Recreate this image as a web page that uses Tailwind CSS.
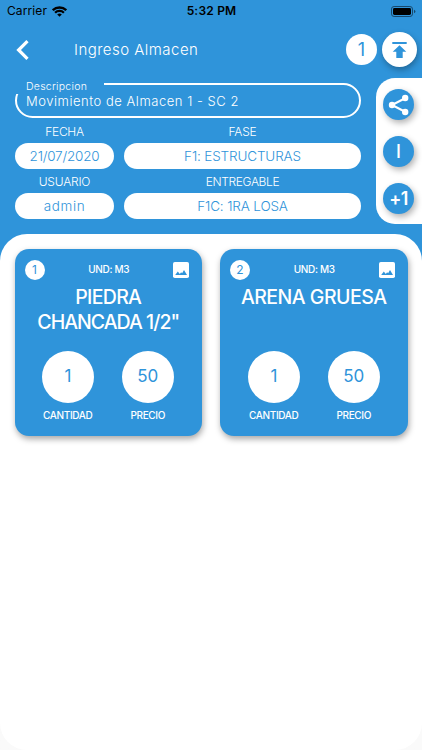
<!DOCTYPE html>
<html lang="es">
<head>
  <meta charset="UTF-8">
  <meta name="viewport" content="width=device-width, initial-scale=1.0">
  <title>Ingreso Almacen</title>
  <script src="https://cdn.jsdelivr.net/npm/@tailwindcss/browser@4"></script>
</head>
<body class="w-[422px] h-[750px] overflow-hidden bg-[#fafafa] font-['Inter',sans-serif] font-light text-white">
  <div class="h-full bg-linear-to-b from-[#2f94da] from-[280px] to-[#fafafa] to-[280px] flex flex-col">
    <!-- Barra de estado -->
    <div class="h-[22px] shrink-0 grid grid-cols-3 items-center pl-[7px] pr-[6px] text-black text-xs">
      <div class="flex items-center gap-[5px]">
        <span class="font-normal tracking-[0.1px]">Carrier</span>
        <svg class="w-[15px] h-[11px]" viewBox="0 0 15 11" fill="none" stroke="currentColor" stroke-width="2.3">
          <path d="M.8 4.2a9.6 9.6 0 0 1 13.4 0M3.1 6.7a6.3 6.3 0 0 1 8.8 0"/>
          <path d="M7.5 10.8 5.2 8.5a3.3 3.3 0 0 1 4.6 0z" fill="currentColor" stroke="none"/>
        </svg>
      </div>
      <span class="font-semibold text-center tracking-[0.2px]">5:32 PM</span>
      <svg class="justify-self-end w-[25px] h-[11px]" viewBox="0 0 25 11">
        <rect x=".5" y=".5" width="21" height="10" rx="2.6" fill="none" stroke="#17486b"/>
        <rect x="2" y="2" width="18" height="7" rx="1.4"/>
        <path d="M23 3.7v3.6q1.4-.5 1.4-1.8T23 3.7z" fill="#17486b"/>
      </svg>
    </div>

    <!-- Cabecera -->
    <header class="h-[55px] shrink-0 flex items-center pl-[16px] pr-[5px]">
      <svg class="w-[13px] h-5" viewBox="0 0 13 20" fill="none" stroke="currentColor" stroke-width="3.2"><path d="M11.5 1.2 2.6 10l8.9 8.8"/></svg>
      <h1 class="ml-[45px] pt-[2px] flex-1 text-[15px] tracking-[0.47px]">Ingreso Almacen</h1>
      <span class="size-[31px] rounded-full bg-white text-[#2f94da] text-[18px] font-normal flex items-center justify-center">1</span>
      <button class="ml-[5px] size-[35px] rounded-full bg-white text-[#2f94da] flex items-center justify-center shadow-[1px_3px_6px_rgba(0,0,0,0.3)]">
        <svg class="w-[15px] h-4" viewBox="0 0 15 16" fill="currentColor"><path d="M.3 0h14.4v1.9H.3zM7.5 3.3l6.8 6.5h-3.6v6.1H4.3V9.8H.7z"/></svg>
      </button>
    </header>

    <div class="h-[157px] shrink-0 flex justify-between items-start">
      <!-- Datos del movimiento -->
      <section class="ml-[15px] mt-[6px] w-[346px]">
        <div class="relative h-[35px] rounded-full border-2 border-white px-[9px] pt-[7px] text-[13px] leading-[18px] tracking-[0.53px] whitespace-nowrap">
          <span class="absolute -left-[3px] -top-[5px] w-[90px] h-[14px] bg-[#2f94da] pl-[12px] pt-[1px] text-[10.5px] leading-[12px] tracking-[0.25px]">Descripcion</span>
          <span class="relative">Movimiento de Almacen 1 - SC 2</span>
        </div>
        <div class="mt-[4px] grid grid-cols-[99px_237px] gap-x-[10px] text-center">
          <span class="h-[21px] leading-[20px] text-xs tracking-[-0.3px]">FECHA</span>
          <span class="h-[21px] leading-[20px] text-xs tracking-[-0.2px]">FASE</span>
          <span class="h-[26px] rounded-full bg-white text-[#2f94da] text-[13.5px] leading-[27px] tracking-[-0.2px]">21/07/2020</span>
          <span class="h-[26px] rounded-full bg-white text-[#2f94da] text-[13.5px] leading-[27px] tracking-[-0.15px]">F1: ESTRUCTURAS</span>
          <span class="h-[24px] leading-[26px] text-xs tracking-[-0.2px]">USUARIO</span>
          <span class="h-[24px] leading-[26px] text-xs tracking-[-0.35px]">ENTREGABLE</span>
          <span class="h-[26px] rounded-full bg-white text-[#2f94da] text-[13.5px] leading-[27px] tracking-[0.6px]">admin</span>
          <span class="h-[26px] rounded-full bg-white text-[#2f94da] text-[13.5px] leading-[27px] tracking-[-0.15px]">F1C: 1RA LOSA</span>
        </div>
      </section>

      <!-- Acciones laterales -->
      <aside class="mt-px w-[46px] h-[146px] rounded-l-[19px] bg-white pl-[7px] pt-[11px] flex flex-col gap-4 text-white">
        <button class="size-[31px] rounded-full bg-[#2f94da] flex items-center justify-center shadow-[2px_3px_6px_rgba(0,0,0,0.3)]">
          <svg class="size-[22px]" viewBox="0 0 22 22" fill="currentColor">
            <path d="M17.5 4 4 11l13.5 7" fill="none" stroke="currentColor" stroke-width="2.1"/>
            <circle cx="17.2" cy="4" r="3.2"/><circle cx="4" cy="11" r="3.2"/><circle cx="17.2" cy="18" r="3.2"/>
          </svg>
        </button>
        <button class="size-[31px] rounded-full bg-[#2f94da] flex items-center justify-center shadow-[2px_3px_6px_rgba(0,0,0,0.3)] text-[18px] font-medium">I</button>
        <button class="size-[31px] rounded-full bg-[#2f94da] flex items-center justify-center shadow-[2px_3px_6px_rgba(0,0,0,0.3)] text-[18px] font-semibold tracking-[-0.5px]">+1</button>
      </aside>
    </div>

    <!-- Lista de materiales -->
    <main class="flex-1 rounded-[27px] bg-white px-[14.5px] pt-[15px] flex items-start gap-[18px]">
      <article class="w-[187.5px] h-[187px] shrink-0 rounded-[14px] bg-[#2f94da] shadow-[1px_3px_6px_rgba(0,0,0,0.35)] flex flex-col">
        <div class="h-[41px] shrink-0 pl-[10px] pr-[13px] flex items-center justify-between">
          <span class="size-5 rounded-full bg-white text-[#2f94da] text-xs font-normal flex items-center justify-center">1</span>
          <span class="text-[10px] font-medium tracking-[-0.3px]">UND: M3</span>
          <svg class="size-4" viewBox="0 0 16 16"><rect width="16" height="16" rx="1.8" fill="#fff"/><path d="M2.2 13 4.8 9.6l2 2.3 1.3-1.7 1 1.1L11 8l3 5z" fill="#2f94da"/></svg>
        </div>
        <h2 class="h-[61px] shrink-0 -mt-[5px] text-center text-[19.5px] leading-[24.5px] font-medium"><span class="tracking-[-0.7px]">PIEDRA</span><br><span class="tracking-[-0.97px]">CHANCADA 1/2"</span></h2>
        <div class="mt-[5px] -ml-px flex justify-center gap-[28px] text-center text-[10px] font-medium tracking-[-0.35px]">
          <div class="w-[52px] flex flex-col items-center">
            <span class="size-[52px] rounded-full bg-white text-[#2f94da] text-[17px] font-normal flex items-center justify-center">1</span>
            <span class="mt-[5px]">CANTIDAD</span>
          </div>
          <div class="w-[52px] flex flex-col items-center">
            <span class="size-[52px] rounded-full bg-white text-[#2f94da] text-[17px] font-normal flex items-center justify-center tracking-normal">50</span>
            <span class="mt-[5px]">PRECIO</span>
          </div>
        </div>
      </article>
      <article class="w-[187.5px] h-[187px] shrink-0 rounded-[14px] bg-[#2f94da] shadow-[1px_3px_6px_rgba(0,0,0,0.35)] flex flex-col">
        <div class="h-[41px] shrink-0 pl-[10px] pr-[13px] flex items-center justify-between">
          <span class="size-5 rounded-full bg-white text-[#2f94da] text-xs font-normal flex items-center justify-center">2</span>
          <span class="text-[10px] font-medium tracking-[-0.3px]">UND: M3</span>
          <svg class="size-4" viewBox="0 0 16 16"><rect width="16" height="16" rx="1.8" fill="#fff"/><path d="M2.2 13 4.8 9.6l2 2.3 1.3-1.7 1 1.1L11 8l3 5z" fill="#2f94da"/></svg>
        </div>
        <h2 class="h-[61px] shrink-0 -mt-[5px] text-center text-[19.5px] leading-[24.5px] font-medium tracking-[-0.5px]">ARENA GRUESA</h2>
        <div class="mt-[5px] flex justify-center gap-[28px] text-center text-[10px] font-medium tracking-[-0.35px]">
          <div class="w-[52px] flex flex-col items-center">
            <span class="size-[52px] rounded-full bg-white text-[#2f94da] text-[17px] font-normal flex items-center justify-center">1</span>
            <span class="mt-[5px]">CANTIDAD</span>
          </div>
          <div class="w-[52px] flex flex-col items-center">
            <span class="size-[52px] rounded-full bg-white text-[#2f94da] text-[17px] font-normal flex items-center justify-center tracking-normal">50</span>
            <span class="mt-[5px]">PRECIO</span>
          </div>
        </div>
      </article>
    </main>
  </div>
</body>
</html>
